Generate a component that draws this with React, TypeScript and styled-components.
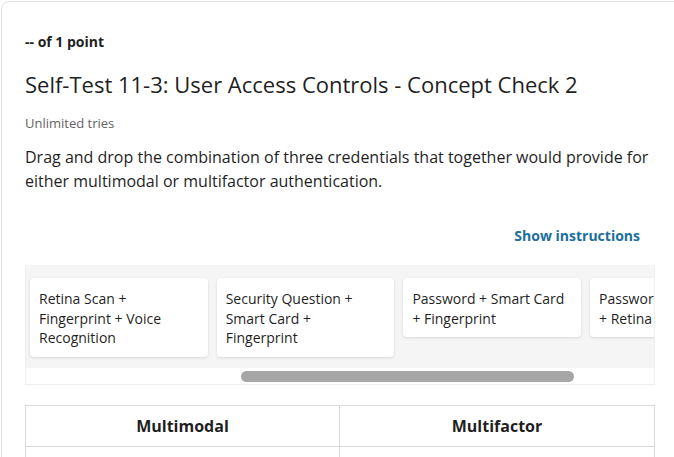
import React from "react";
import styled, { createGlobalStyle } from "styled-components";

const GlobalStyle = createGlobalStyle`
  html, body {
    margin: 0;
    padding: 0;
    background: #ffffff;
    overflow: hidden;
  }
  body {
    font-family: "Open Sans", "Noto Sans", sans-serif;
    color: #1f1f1f;
  }
`;

const Page = styled.div`
  width: 674px;
  height: 457px;
  overflow: hidden;
  padding: 1px 0 0 1px;
  box-sizing: border-box;
`;

const QuestionCard = styled.section`
  width: 680px;
  box-sizing: border-box;
  border: 1px solid #e3e3e3;
  border-radius: 8px;
  padding: 24px 25px 0 23px;
  min-height: 500px;
`;

const Points = styled.div`
  font-size: 14px;
  font-weight: 700;
  line-height: 20px;
  margin-top: 6px;
`;

const Title = styled.h2`
  margin: 17px 0 0;
  font-size: 22px;
  font-weight: 400;
  line-height: 30px;
`;

const Tries = styled.div`
  margin-top: 15px;
  font-size: 13px;
  line-height: 18px;
  color: #636363;
`;

const Prompt = styled.p`
  margin: 14px 0 0;
  font-size: 16px;
  line-height: 23.5px;
`;

const InstructionsRow = styled.div`
  display: flex;
  justify-content: flex-end;
  margin-top: 33px;
  padding-right: 15px;
`;

const LinkButton = styled.button`
  border: none;
  background: none;
  padding: 0;
  font-family: inherit;
  font-size: 14px;
  font-weight: 700;
  line-height: 20px;
  color: #1a6f9e;
  cursor: pointer;
`;

const DragTray = styled.div`
  margin-top: 19px;
  border: 1px solid #f0f0f0;
  border-top: none;
  background: #ffffff;
  overflow: hidden;
`;

const OptionStrip = styled.div`
  display: flex;
  align-items: flex-start;
  gap: 9px;
  background: #f5f5f5;
  padding: 13px 0 11px 4px;
  height: 79px;
  overflow: hidden;
`;

const Option = styled.div`
  flex: 0 0 177.7px;
  box-sizing: border-box;
  background: #ffffff;
  border-radius: 4px;
  box-shadow: 0 1px 3px rgba(0, 0, 0, 0.12);
  padding: 11px 9px 9px;
  font-size: 14px;
  line-height: 19.5px;
  color: #1f1f1f;
`;

const ScrollTrack = styled.div`
  height: 16px;
  display: flex;
  align-items: center;
`;

const ScrollThumb = styled.div`
  margin-left: 215px;
  width: 333px;
  height: 11px;
  border-radius: 6px;
  background: #a6a6a6;
`;

const Buckets = styled.div`
  display: grid;
  grid-template-columns: 1fr 1fr;
  box-sizing: border-box;
  width: 100%;
  margin-top: 20px;
  border: 1px solid #d9d9d9;
  border-bottom: none;
`;

const BucketHead = styled.div<{ $last?: boolean }>`
  height: 40px;
  display: flex;
  align-items: center;
  justify-content: center;
  font-size: 16px;
  font-weight: 700;
  border-right: ${(p) => (p.$last ? "none" : "1px solid #d9d9d9")};
  border-bottom: 1px solid #d9d9d9;
`;

const BucketBody = styled.div<{ $last?: boolean }>`
  height: 60px;
  border-right: ${(p) => (p.$last ? "none" : "1px solid #d9d9d9")};
`;

const options = [
  "Retina Scan + Fingerprint + Voice Recognition",
  "Security Question + Smart Card + Fingerprint",
  "Password + Smart Card + Fingerprint",
  "Password + Smart Card + Retina Scan",
];

export default function App() {
  return (
    <>
      <GlobalStyle />
      <Page>
        <QuestionCard>
          <Points>-- of 1 point</Points>
          <Title>Self-Test 11-3: User Access Controls - Concept Check 2</Title>
          <Tries>Unlimited tries</Tries>
          <Prompt>
            Drag and drop the combination of three credentials that together
            would provide for either multimodal or multifactor authentication.
          </Prompt>
          <InstructionsRow>
            <LinkButton>Show instructions</LinkButton>
          </InstructionsRow>
          <DragTray>
            <OptionStrip>
              {options.map((o) => (
                <Option key={o}>{o}</Option>
              ))}
            </OptionStrip>
            <ScrollTrack>
              <ScrollThumb />
            </ScrollTrack>
          </DragTray>
          <Buckets>
            <BucketHead>Multimodal</BucketHead>
            <BucketHead $last>Multifactor</BucketHead>
            <BucketBody />
            <BucketBody $last />
          </Buckets>
        </QuestionCard>
      </Page>
    </>
  );
}
